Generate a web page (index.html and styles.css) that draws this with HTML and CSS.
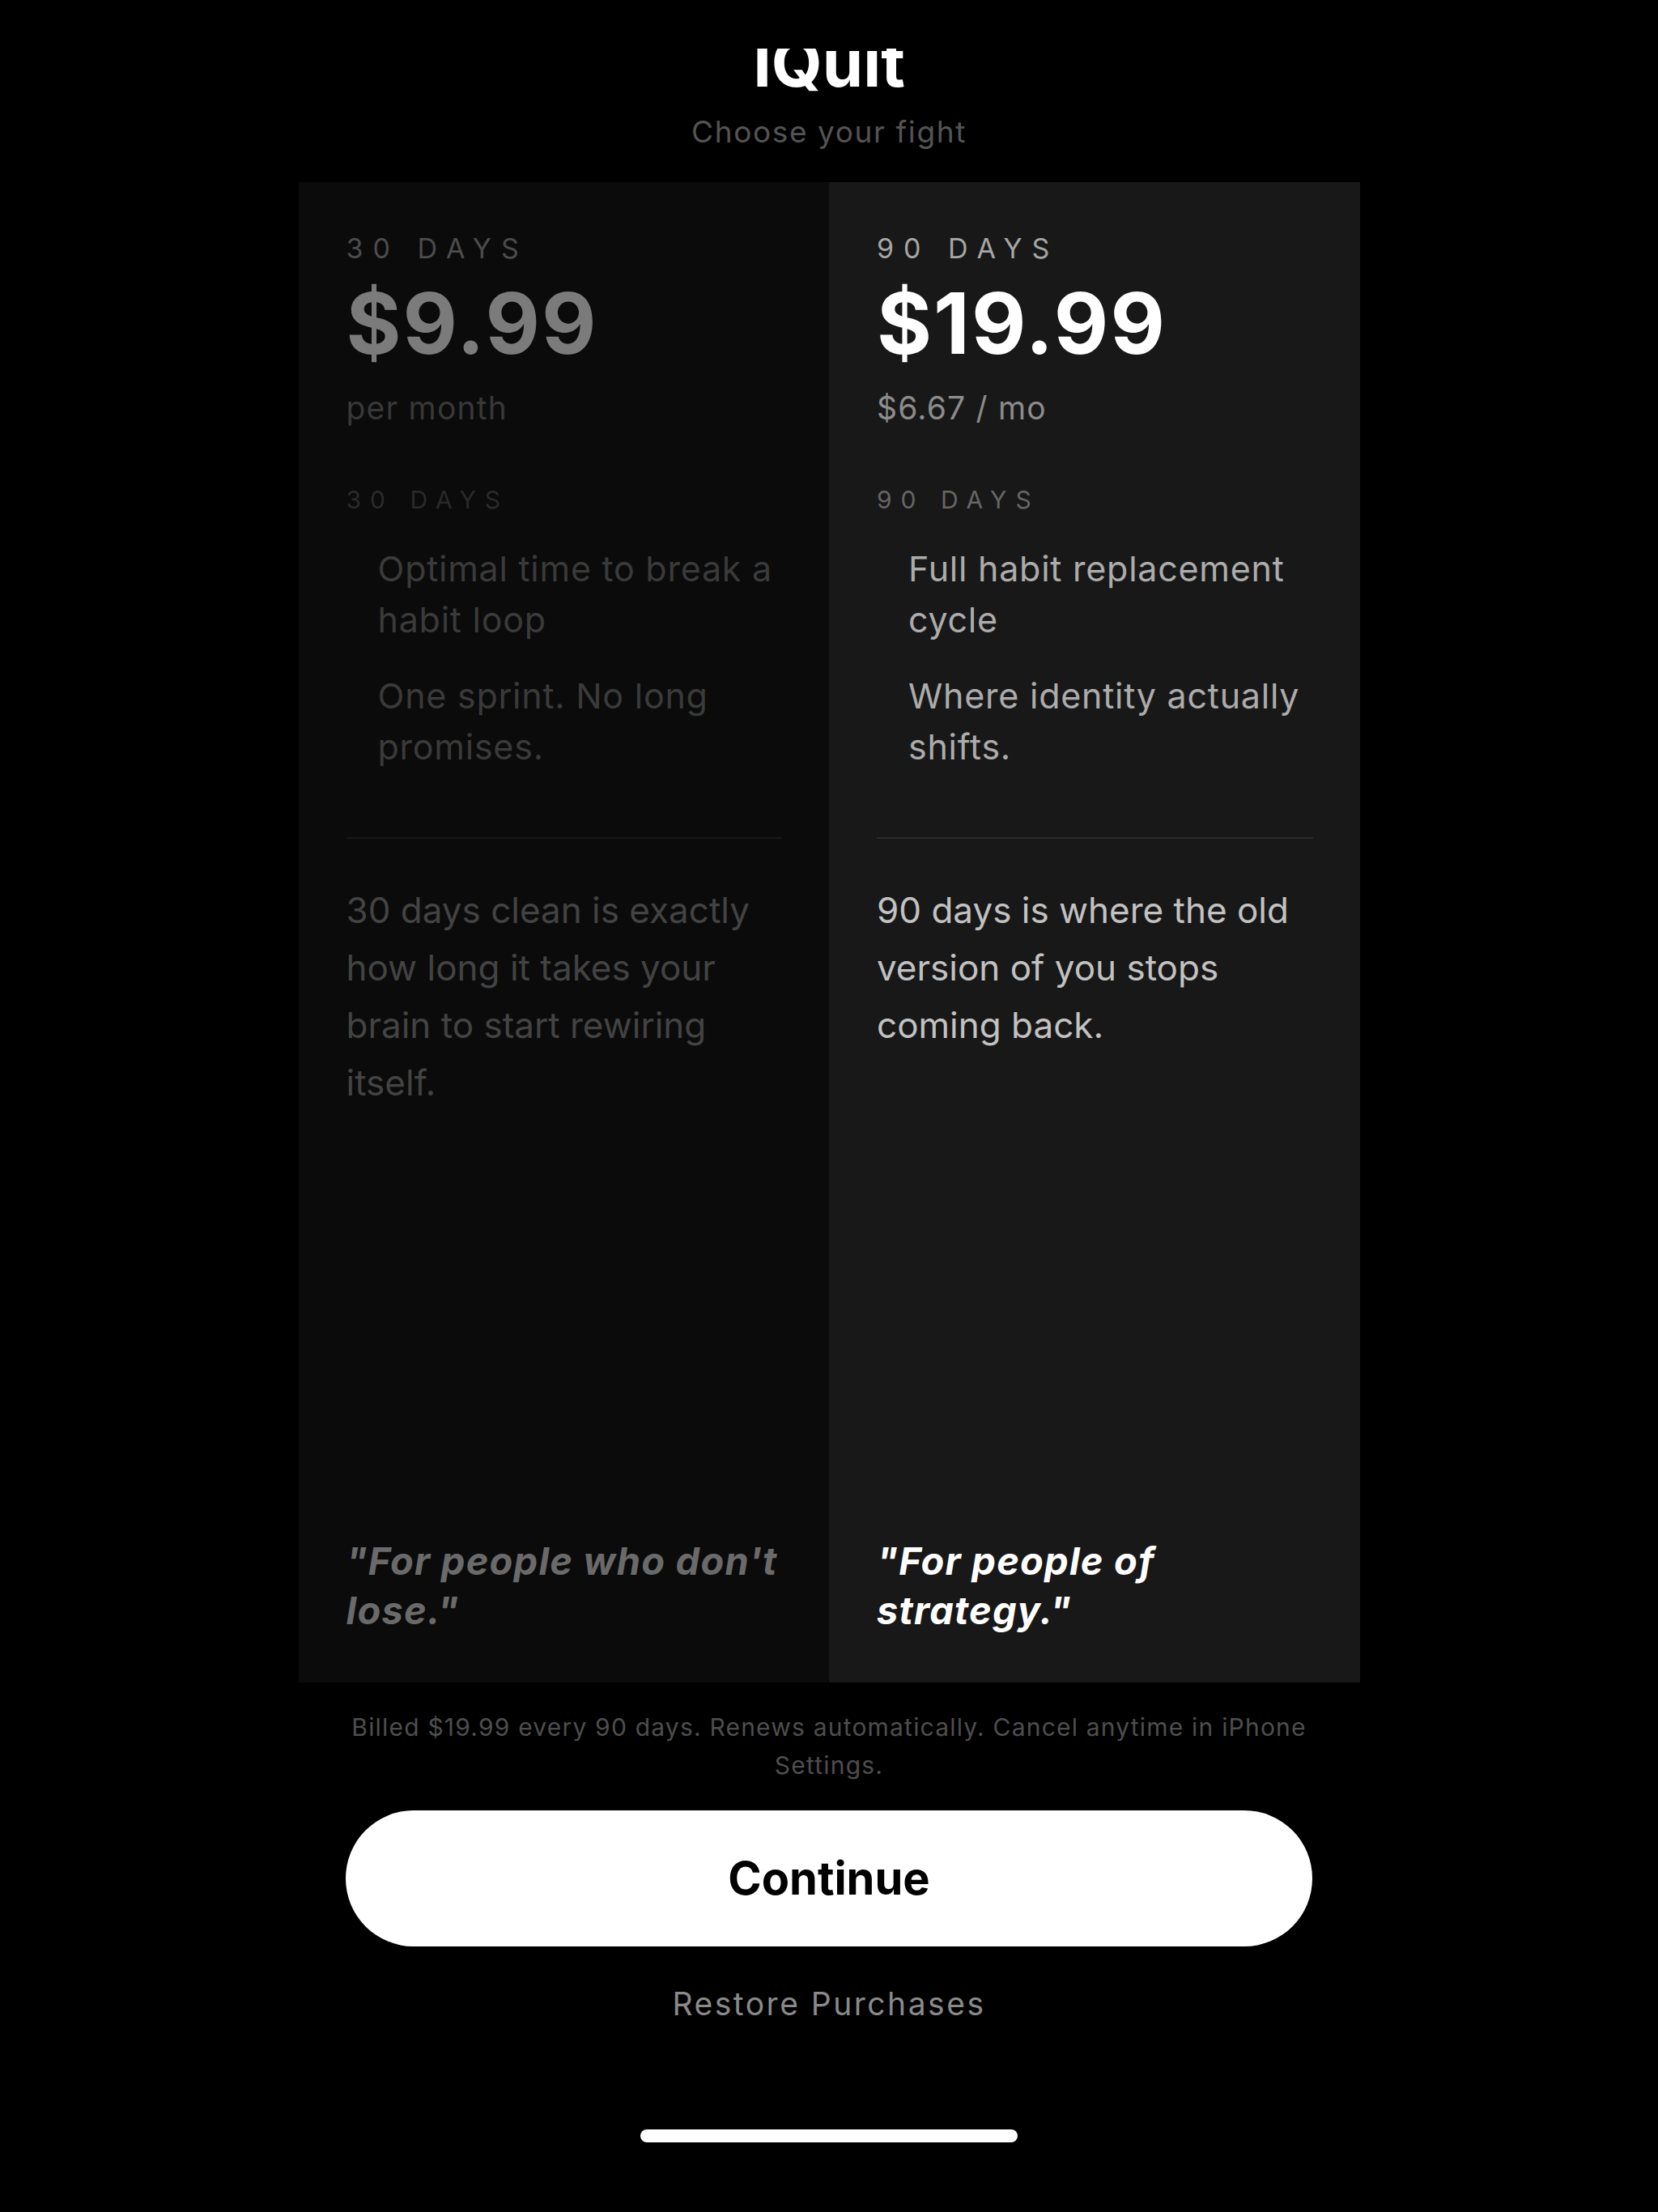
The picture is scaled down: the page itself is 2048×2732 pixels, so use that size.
FILE: index.html
```html
<!DOCTYPE html>
<html lang="en">
<head>
<meta charset="utf-8">
<title>IQuit – Choose your fight</title>
<link rel="stylesheet" href="styles.css">
</head>
<body>
<main class="screen">
  <header class="head">
    <div class="title-clip"><h1 class="title">IQuit</h1></div>
    <p class="subtitle">Choose your fight</p>
  </header>

  <section class="plans">
    <article class="plan plan--dim">
      <div class="plan-label">30 DAYS</div>
      <div class="plan-price">$9.99</div>
      <div class="plan-per">per month</div>
      <div class="plan-sublabel">30 DAYS</div>
      <ul class="plan-points">
        <li>Optimal time to break a habit loop</li>
        <li>One sprint. No long promises.</li>
      </ul>
      <hr class="plan-rule">
      <p class="plan-desc">30 days clean is exactly how long it takes your brain to start rewiring itself.</p>
      <p class="plan-quote">"For people who don't lose."</p>
    </article>

    <article class="plan plan--active">
      <div class="plan-label">90 DAYS</div>
      <div class="plan-price">$19.99</div>
      <div class="plan-per">$6.67 / mo</div>
      <div class="plan-sublabel">90 DAYS</div>
      <ul class="plan-points">
        <li>Full habit replacement cycle</li>
        <li>Where identity actually shifts.</li>
      </ul>
      <hr class="plan-rule">
      <p class="plan-desc">90 days is where the old version of you stops coming back.</p>
      <p class="plan-quote">"For people of strategy."</p>
    </article>
  </section>

  <p class="fineprint">Billed $19.99 every 90 days. Renews automatically. Cancel anytime in iPhone Settings.</p>

  <button class="cta" type="button">Continue</button>

  <a class="restore" href="#">Restore Purchases</a>

  <div class="home-indicator"></div>
</main>
</body>
</html>
```

FILE: styles.css
```css
* { box-sizing: border-box; }

html, body {
  margin: 0;
  padding: 0;
  background: #000;
}

body {
  font-family: Inter, "Noto Sans", "Liberation Sans", sans-serif;
  color: #fff;
  -webkit-font-smoothing: antialiased;
}

.screen {
  width: 2048px;
  min-height: 2732px;
  display: flex;
  flex-direction: column;
  align-items: center;
}

/* ---------- header ---------- */
.head {
  display: flex;
  flex-direction: column;
  align-items: center;
}

.title-clip {
  margin-top: 60px;
  height: 56px;
  overflow: hidden;
}

.title {
  margin: -22px 0 0;
  font-size: 81px;
  line-height: 80px;
  font-weight: 700;
  letter-spacing: 0;
  color: #fff;
}

.subtitle {
  margin: 22px 0 0;
  font-size: 37px;
  line-height: 50px;
  letter-spacing: 1.6px;
  color: #545454;
}

/* ---------- plans ---------- */
.plans {
  margin-top: 37px;
  width: 1311px;
  display: grid;
  grid-template-columns: 1fr 1fr;
}

.plan {
  min-height: 1853px;
  padding: 62px 58px 59px 59px;
  display: flex;
  flex-direction: column;
}

.plan--dim { background: #0b0b0b; }
.plan--active { background: #181818; }

.plan-label {
  font-size: 34px;
  line-height: 40px;
  letter-spacing: 12px;
}

.plan-price {
  margin-top: 17px;
  font-size: 104px;
  line-height: 110px;
  font-weight: 700;
  letter-spacing: 2px;
}

.plan-per {
  margin-top: 27px;
  font-size: 39px;
  line-height: 46px;
  letter-spacing: 1.2px;
}

.plan-sublabel {
  margin-top: 72px;
  font-size: 30px;
  line-height: 36px;
  letter-spacing: 11px;
}

.plan-points {
  list-style: none;
  margin: 36px 0 0;
  padding: 0 0 0 39px;
  display: flex;
  flex-direction: column;
  gap: 31px;
}

.plan-points li {
  font-size: 43px;
  line-height: 63px;
  letter-spacing: 0.75px;
}

.plan-rule {
  margin: 80px 0 0;
  border: 0;
  height: 2px;
}

.plan-desc {
  margin: 53px 0 0;
  font-size: 44px;
  line-height: 71px;
  letter-spacing: 0;
}

.plan-quote {
  margin: auto 0 0;
  font-size: 47px;
  line-height: 61px;
  font-weight: 700;
  font-style: italic;
  letter-spacing: 1.2px;
}

/* dim (unselected) */
.plan--dim .plan-label { color: #4c4c4c; }
.plan--dim .plan-price { color: #7b7b7b; }
.plan--dim .plan-per { color: #383838; }
.plan--dim .plan-sublabel { color: #2a2a2a; }
.plan--dim .plan-points li { color: #3a3a3a; }
.plan--dim .plan-rule { background: #181818; }
.plan--dim .plan-desc { color: #434343; }
.plan--dim .plan-quote { color: #6a6a6a; }

/* active (selected) */
.plan--active .plan-label { color: #a6a6a6; }
.plan--active .plan-price { color: #ffffff; }
.plan--active .plan-per { color: #8c8c8c; }
.plan--active .plan-sublabel { color: #666666; }
.plan--active .plan-points li { color: #acacac; }
.plan--active .plan-rule { background: #2a2a2a; }
.plan--active .plan-desc { color: #c2c2c2; }
.plan--active .plan-quote { color: #ffffff; }

/* ---------- footer ---------- */
.fineprint {
  margin: 32px 0 0;
  width: 1200px;
  text-align: center;
  font-size: 30px;
  line-height: 47px;
  letter-spacing: 1.2px;
  color: #4e4e4e;
}

.cta {
  margin-top: 32px;
  width: 1194px;
  height: 168px;
  border: 0;
  border-radius: 84px;
  background: #fff;
  color: #000;
  font-family: inherit;
  font-size: 56px;
  font-weight: 700;
  cursor: pointer;
}

.restore {
  margin-top: 46px;
  font-size: 39px;
  line-height: 50px;
  letter-spacing: 2.5px;
  color: #8a8a8a;
  text-decoration: none;
}

.home-indicator {
  margin-top: 130px;
  width: 466px;
  height: 16px;
  border-radius: 8px;
  background: #fff;
}
```
